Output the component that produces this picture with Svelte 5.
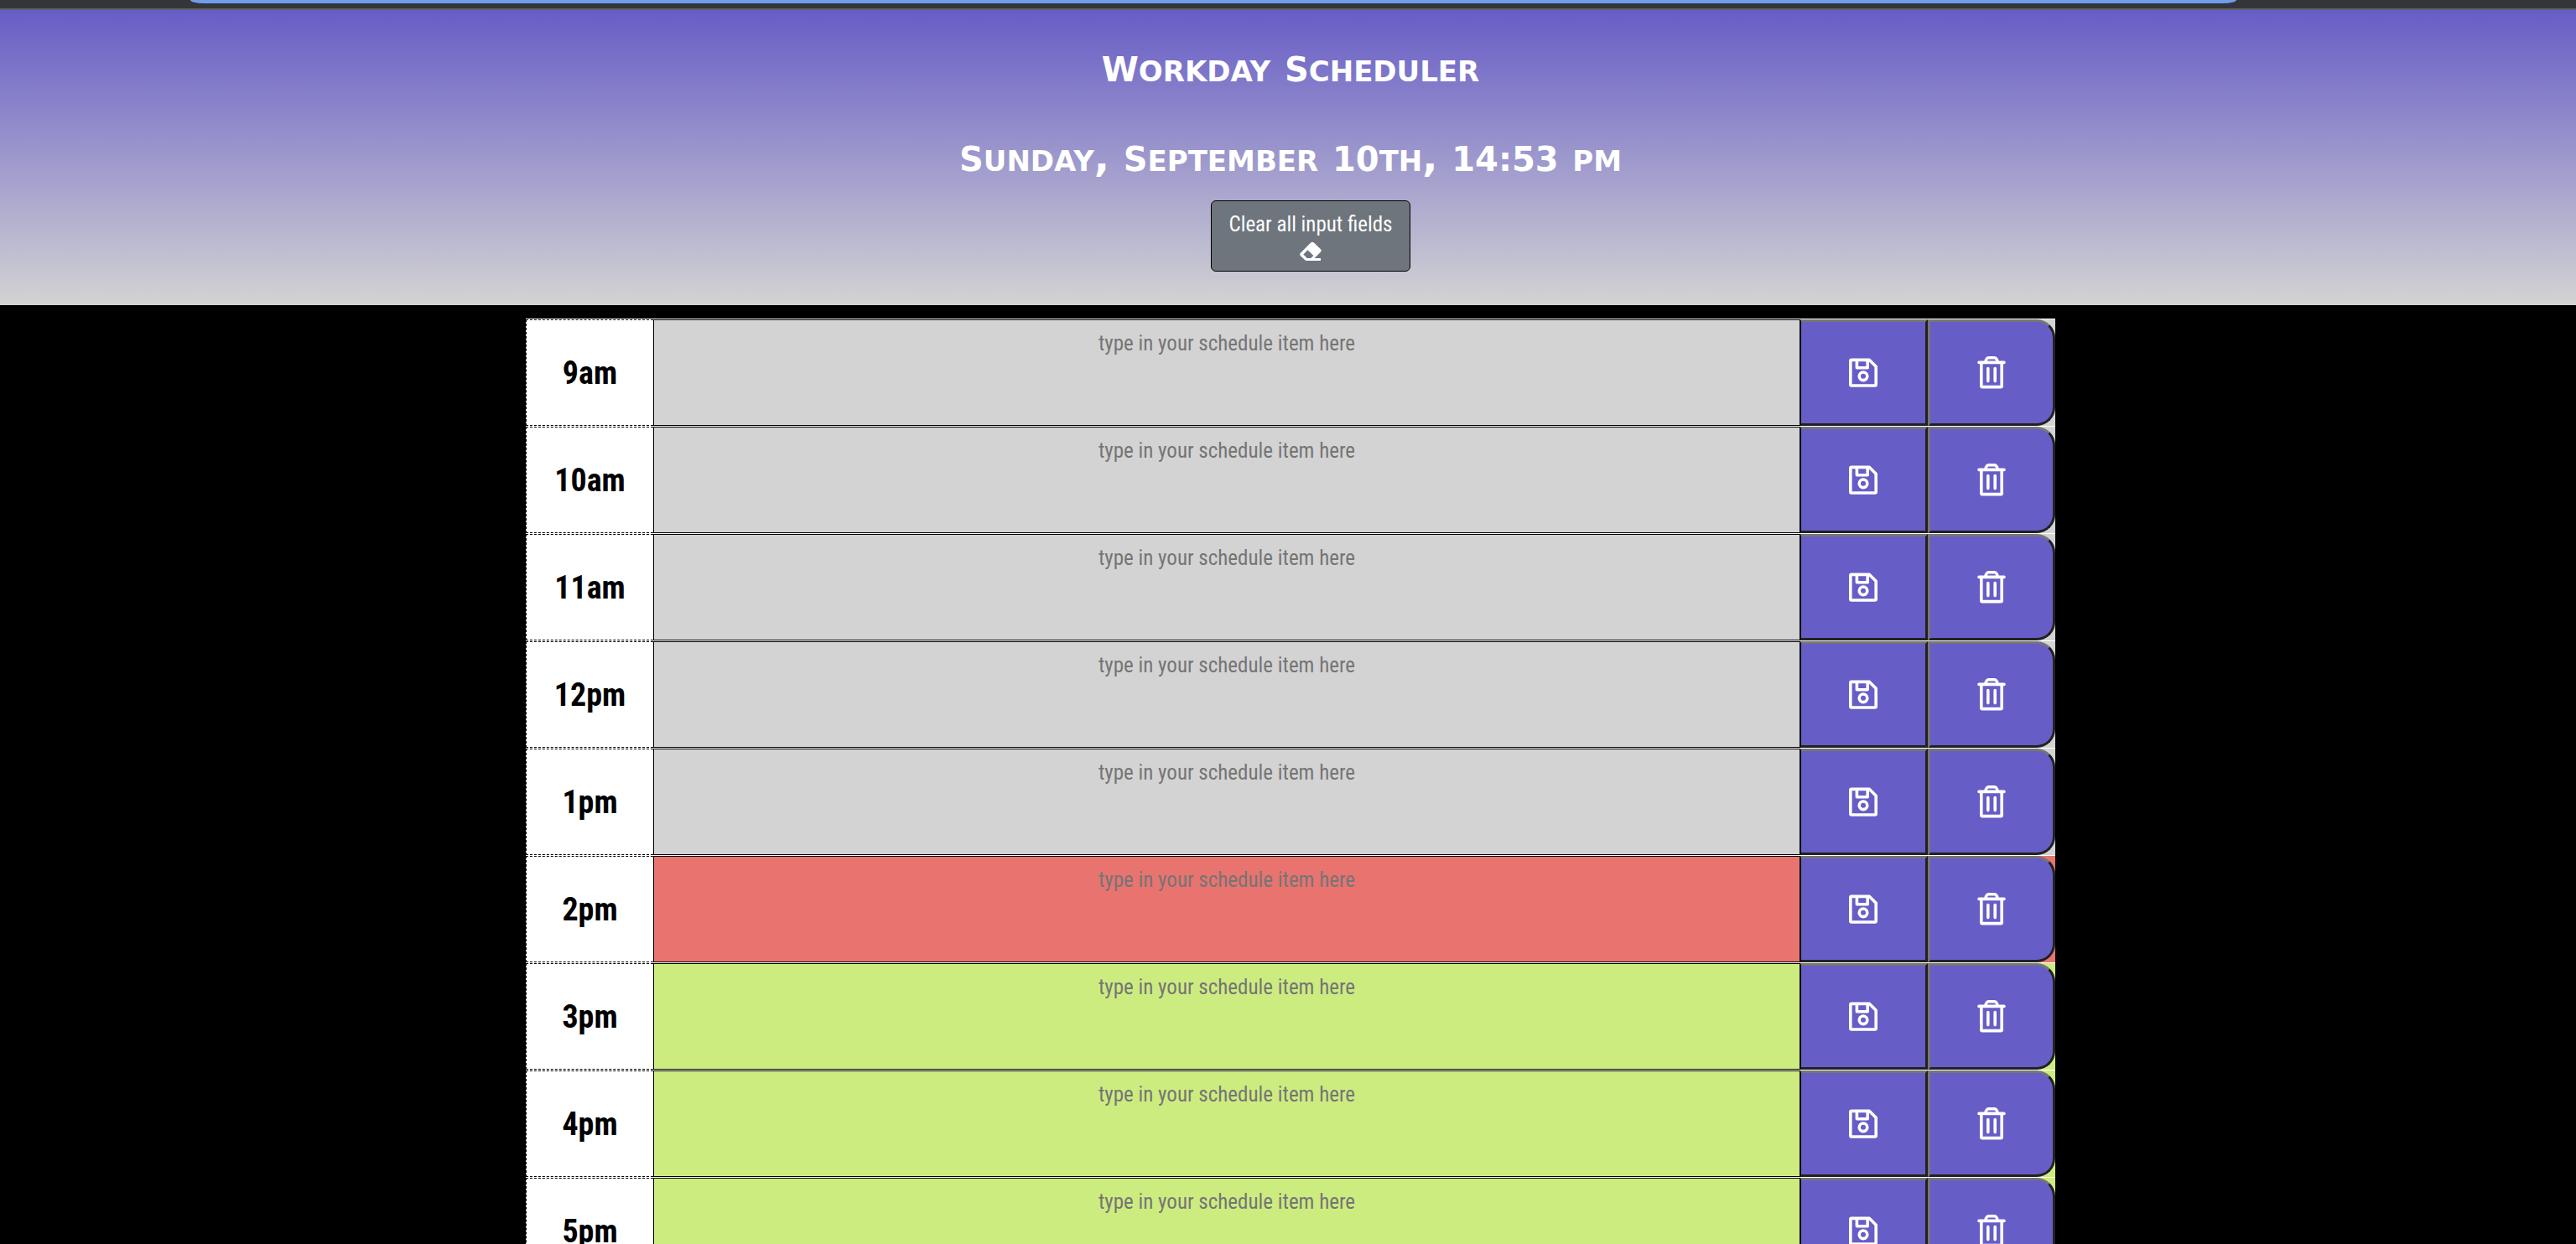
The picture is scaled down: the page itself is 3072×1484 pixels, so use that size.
<script>
  const placeholder = 'type in your schedule item here';
  const hours = [
    { label: '9am', state: 'past' },
    { label: '10am', state: 'past' },
    { label: '11am', state: 'past' },
    { label: '12pm', state: 'past' },
    { label: '1pm', state: 'past' },
    { label: '2pm', state: 'present' },
    { label: '3pm', state: 'future' },
    { label: '4pm', state: 'future' },
    { label: '5pm', state: 'future' }
  ];
  let items = $state(hours.map(() => ''));

  function clearAll() {
    items = hours.map(() => '');
  }
</script>

<div class="page">
  <div class="chrome"><div class="address"></div></div>

  <header>
    <h1><span class="word">Workday</span> <span class="word">Scheduler</span></h1>
    <p class="today"><span class="word">Sunday,</span> <span class="word">September</span> <span class="digits">10</span>th, <span class="digits">14:53</span> pm</p>
    <button class="clear" type="button" onclick={clearAll}>
      <span>Clear all input fields</span>
      <svg viewBox="0 0 26 24" aria-hidden="true">
        <path fill="#fff" fill-rule="evenodd" d="M13.4 1.3Q15 0 16.6 1.3L25 9.2Q26.4 10.8 25 12.4L17.6 20H25V23H8.2Q6.9 23 6 22.1L1 17.2Q-.6 15.5 1 13.8ZM9.5 10.2L4.3 15.5L8.8 20H13.2L16.3 16.9Z" />
      </svg>
    </button>
  </header>

  <main>
    {#each hours as hour, i}
      <section class="row {hour.state}">
        <label class="hour" for="item-{i}">{hour.label}</label>
        <textarea id="item-{i}" {placeholder} bind:value={items[i]}></textarea>
        <button class="save" type="button" aria-label="Save {hour.label}">
          <svg viewBox="0 0 24 24" aria-hidden="true">
            <path fill="none" stroke="#fff" stroke-width="1.8" stroke-linejoin="round" d="M5 4.200H15.700L19.600 8.100V18.900Q19.600 19.500 19 19.500H5Q4.400 19.500 4.400 18.900V4.800Q4.400 4.200 5 4.200ZM8.200 4.500V8.900H14.600V4.500" />
            <circle cx="12" cy="13.900" r="2.400" fill="none" stroke="#fff" stroke-width="1.8" />
          </svg>
        </button>
        <button class="delete" type="button" aria-label="Delete {hour.label}" onclick={() => (items[i] = '')}>
          <svg viewBox="0 0 24 24" aria-hidden="true">
            <path fill="none" stroke="#fff" stroke-width="1.8" stroke-linecap="round" stroke-linejoin="round" d="M4.500 5.700H19.500M5.900 5.900V19.700Q5.900 20.300 6.500 20.300H17.500Q18.100 20.300 18.100 19.700V5.900M8.400 5.500Q8.900 2.900 10.200 2.900H13.800Q15.100 2.900 15.600 5.500M9.900 9.300V16.800M14.100 9.300V16.800" />
          </svg>
        </button>
      </section>
    {/each}
  </main>
</div>

<style>
  :global(body) {
    margin: 0;
    background: #000;
  }
  .page {
    height: 100vh;
    overflow: hidden;
    background: #000;
    font-family: 'Roboto Condensed', 'Liberation Sans Narrow', Roboto, sans-serif;
  }
  .chrome {
    height: 10px;
    padding: 0 13.2% 0 7.4%;
    background: #343538;
    border-bottom: 2px solid #5f6163;
  }
  .address {
    height: 4px;
    background: #6f9fec;
    border-radius: 0 0 16px 16px / 0 0 4px 4px;
  }
  header {
    display: flex;
    flex-direction: column;
    align-items: center;
    padding: 44px 0 40px 6px;
    background: linear-gradient(#675dc6, #d3d3d3);
    color: #fff;
  }
  h1,
  .today {
    height: 48px;
    margin: 0;
    font-family: 'DejaVu Sans', sans-serif;
    font-size: 48px;
    font-weight: 700;
    line-height: 48px;
    font-variant: small-caps;
  }
  .today {
    margin-top: 59px;
  }
  .word {
    display: inline-block;
  }
  .word::first-letter,
  .digits {
    font-size: 40px;
    line-height: 32px;
  }
  .clear {
    display: flex;
    flex-direction: column;
    align-items: center;
    gap: 4px;
    margin: 28px 0 0 48px;
    padding: 12px 20px 11px;
    border: 1px solid #000;
    border-radius: 6px;
    background: #6e757c;
    color: #fff;
    font-family: inherit;
    font-size: 25px;
    line-height: 32px;
  }
  .clear svg {
    width: 26px;
    height: 24px;
  }
  main {
    width: 1824px;
    max-width: 100%;
    margin: 16px auto 0;
    padding-left: 6px;
  }
  .row {
    display: grid;
    grid-template-columns: 1fr 9fr 1fr 1fr;
    height: 127px;
    border-top: 1px solid #fff;
  }
  .past {
    background: #d3d3d3;
  }
  .present {
    background: #e9736f;
  }
  .future {
    background: #cdec80;
  }
  .hour {
    display: flex;
    align-items: center;
    justify-content: center;
    border: 1px dashed #000;
    border-right: 0;
    background: #fff;
    color: #000;
    font-size: 38px;
    font-weight: 700;
    line-height: 48px;
  }
  textarea {
    box-sizing: border-box;
    width: 100%;
    height: 127px;
    margin: 0;
    padding: 10px 4px;
    border: 1px solid #000;
    border-radius: 0;
    outline: 0;
    resize: none;
    background: transparent;
    color: #000;
    font-family: inherit;
    font-size: 25px;
    line-height: 36px;
    text-align: center;
  }
  textarea::placeholder {
    color: #757575;
    opacity: 1;
  }
  .save,
  .delete {
    display: flex;
    align-items: center;
    justify-content: center;
    padding: 0;
    border: 3px solid;
    border-color: #767676 #212121 #212121 #767676;
    background: #675dc6;
  }
  .save {
    border-left: 1px solid #000;
  }
  .delete {
    border-radius: 0 22px 22px 0;
  }
  .save svg,
  .delete svg {
    width: 48px;
    height: 48px;
  }
</style>
